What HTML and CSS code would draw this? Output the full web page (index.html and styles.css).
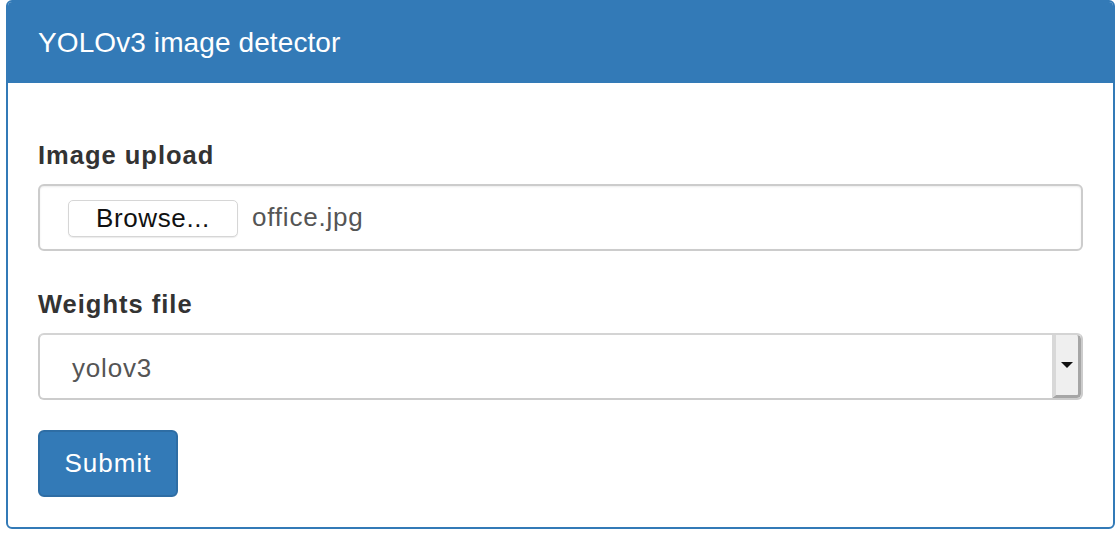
FILE: index.html
```html
<!DOCTYPE html>
<html>
<head>
<meta charset="utf-8">
<title>YOLOv3 image detector</title>
<link rel="stylesheet" href="styles.css">
</head>
<body>
<div class="panel">
  <div class="panel-heading">
    <h3 class="panel-title">YOLOv3 image detector</h3>
  </div>
  <div class="panel-body">
    <form class="form">
      <div class="form-group">
        <label class="form-label">Image upload</label>
        <div class="file-input">
          <span class="browse-btn">Browse...</span>
          <span class="file-name">office.jpg</span>
        </div>
      </div>
      <div class="form-group form-group-last">
        <label class="form-label">Weights file</label>
        <div class="select">
          <span class="select-value">yolov3</span>
          <span class="select-arrow"><span class="caret"></span></span>
        </div>
      </div>
      <div class="actions">
        <button type="button" class="btn-primary">Submit</button>
      </div>
    </form>
  </div>
</div>
</body>
</html>
```

FILE: styles.css
```css
* {
  box-sizing: border-box;
}

html, body {
  margin: 0;
  padding: 0;
  background: #ffffff;
  font-family: "Liberation Sans", Arial, sans-serif;
  color: #333333;
}

.panel {
  margin-left: 6px;
  width: 1109px;
  border: 2px solid #337ab7;
  border-radius: 6px;
  overflow: hidden;
}

.panel-heading {
  background: #337ab7;
  height: 81px;
  padding: 25px 30px 0 30px;
}

.panel-title {
  margin: 0;
  font-size: 28px;
  line-height: 32px;
  font-weight: normal;
  letter-spacing: 0.1px;
  color: #ffffff;
}

.panel-body {
  padding: 57px 30px 30px 30px;
}

.form {
  margin: 0;
}

.form-group {
  margin-bottom: 38px;
}

.form-group-last {
  margin-bottom: 30px;
}

.form-label {
  display: block;
  font-size: 25.5px;
  line-height: 30px;
  font-weight: bold;
  letter-spacing: 1px;
  color: #333333;
  margin-bottom: 14px;
}

.file-input {
  height: 67px;
  border: 2px solid #cccccc;
  border-radius: 6px;
  box-shadow: inset 0 1px 2px rgba(0, 0, 0, 0.08);
  display: flex;
  align-items: center;
  padding-left: 28px;
}

.browse-btn {
  width: 170px;
  height: 37px;
  margin-top: 2px;
  border: 1px solid #d6d6d6;
  border-radius: 5px;
  background: #ffffff;
  box-shadow: 0 1px 1px rgba(0, 0, 0, 0.08);
  display: flex;
  align-items: center;
  justify-content: center;
  font-size: 26px;
  letter-spacing: 0.6px;
  color: #111111;
}

.file-name {
  margin-left: 14px;
  font-size: 26px;
  letter-spacing: 0.8px;
  color: #555555;
}

.select {
  height: 67px;
  border: 2px solid #cccccc;
  border-top-color: #d4d4d4;
  border-radius: 6px;
  display: flex;
  align-items: stretch;
  overflow: hidden;
}

.select-value {
  flex: 1;
  display: flex;
  align-items: center;
  padding: 4px 0 0 32px;
  font-size: 26px;
  letter-spacing: 0.8px;
  color: #555555;
}

.select-arrow {
  width: 29px;
  background: #efefef;
  border-left: 4px solid #d8d8d8;
  border-right: 3px solid #a6a6a6;
  border-bottom: 3px solid #a6a6a6;
  border-radius: 0 4px 4px 0;
  display: flex;
  align-items: center;
  justify-content: center;
}

.caret {
  width: 0;
  height: 0;
  border-left: 6px solid transparent;
  border-right: 6px solid transparent;
  border-top: 6px solid #111111;
}

.actions {
  display: flex;
}

.btn-primary {
  width: 140px;
  height: 67px;
  background: #337ab7;
  border: 2px solid #2e6da4;
  border-radius: 6px;
  color: #ffffff;
  font-family: "Liberation Sans", Arial, sans-serif;
  font-size: 26px;
  letter-spacing: 1px;
  padding: 0;
  margin: 0;
}
```
